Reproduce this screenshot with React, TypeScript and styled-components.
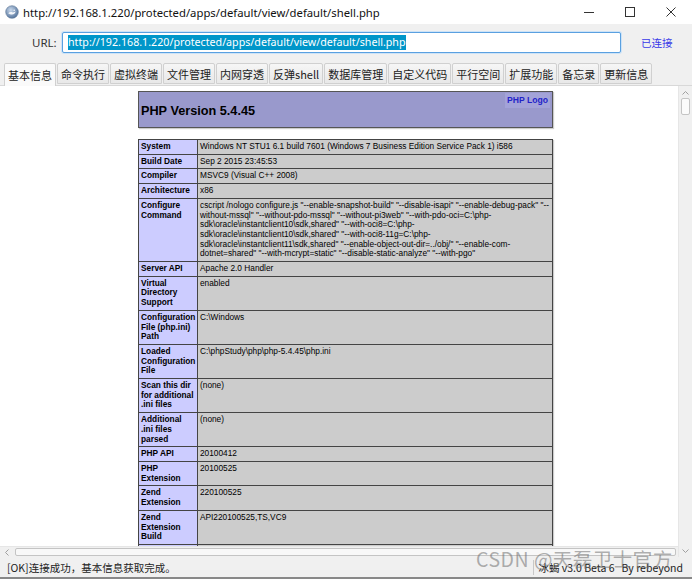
import React from "react";
import styled, { createGlobalStyle } from "styled-components";

const GlobalStyle = createGlobalStyle`
  html, body {
    margin: 0;
    padding: 0;
    background: #ffffff;
  }
  * {
    box-sizing: border-box;
  }
`;

const UI_FONT = `"Noto Sans", "Noto Sans CJK SC", sans-serif`;
const CJK_FONT = `"Noto Sans CJK SC", "Noto Sans", sans-serif`;
const PHP_FONT = `"Liberation Sans", Arial, sans-serif`;

const tabs = [
  "基本信息",
  "命令执行",
  "虚拟终端",
  "文件管理",
  "内网穿透",
  "反弹shell",
  "数据库管理",
  "自定义代码",
  "平行空间",
  "扩展功能",
  "备忘录",
  "更新信息",
];

// keys may carry "\n" where the original browser wrapped them
const rows: [string, string][] = [
  ["System", "Windows NT STU1 6.1 build 7601 (Windows 7 Business Edition Service Pack 1) i586"],
  ["Build Date", "Sep 2 2015 23:45:53"],
  ["Compiler", "MSVC9 (Visual C++ 2008)"],
  ["Architecture", "x86"],
  [
    "Configure Command",
    `cscript /nologo configure.js "--enable-snapshot-build" "--disable-isapi" "--enable-debug-pack" "--without-mssql" "--without-pdo-mssql" "--without-pi3web" "--with-pdo-oci=C:\\php-sdk\\oracle\\instantclient10\\sdk,shared" "--with-oci8=C:\\php-sdk\\oracle\\instantclient10\\sdk,shared" "--with-oci8-11g=C:\\php-sdk\\oracle\\instantclient11\\sdk,shared" "--enable-object-out-dir=../obj/" "--enable-com-dotnet=shared" "--with-mcrypt=static" "--disable-static-analyze" "--with-pgo"`,
  ],
  ["Server API", "Apache 2.0 Handler"],
  ["Virtual Directory Support", "enabled"],
  ["Configuration File (php.ini) Path", "C:\\Windows"],
  ["Loaded Configuration File", "C:\\phpStudy\\php\\php-5.4.45\\php.ini"],
  ["Scan this dir for additional .ini files", "(none)"],
  ["Additional\n.ini files parsed", "(none)"],
  ["PHP API", "20100412"],
  ["PHP Extension", "20100525"],
  ["Zend Extension", "220100525"],
  ["Zend Extension Build", "API220100525,TS,VC9"],
  ["PHP Extension Build", "API20100525,TS,VC9"],
  ["Debug Build", "no"],
  ["Thread Safety", "enabled"],
];

export default function App() {
  return (
    <>
      <GlobalStyle />
      <Window>
        <TitleBar>
          <AppIcon viewBox="0 0 14 14">
            <defs>
              <radialGradient id="ico" cx="40%" cy="35%" r="70%">
                <stop offset="0" stopColor="#c9d9ec" />
                <stop offset="1" stopColor="#4f6f98" />
              </radialGradient>
            </defs>
            <circle cx="7" cy="7" r="6.3" fill="url(#ico)" stroke="#5c7596" strokeWidth="0.6" />
            <path d="M3.2 8.2 C4.5 6.8 6 6.6 7.8 7.4 L10.8 6.4 L9.6 8.6 C8 9.8 5.6 10 3.2 8.2 Z" fill="#f4f7fb" />
            <circle cx="9.2" cy="5.2" r="0.8" fill="#f4f7fb" />
          </AppIcon>
          <TitleText>http://192.168.1.220/protected/apps/default/view/default/shell.php</TitleText>
          <WinControls>
            <WinButton>
              <svg width="10" height="10" viewBox="0 0 10 10">
                <line x1="0" y1="5.5" x2="10" y2="5.5" stroke="#333" strokeWidth="1" />
              </svg>
            </WinButton>
            <WinButton>
              <svg width="10" height="10" viewBox="0 0 10 10">
                <rect x="0.5" y="0.5" width="9" height="9" fill="none" stroke="#333" strokeWidth="1" />
              </svg>
            </WinButton>
            <WinButton>
              <svg width="10" height="10" viewBox="0 0 10 10">
                <path d="M0.5 0.5 L9.5 9.5 M9.5 0.5 L0.5 9.5" stroke="#333" strokeWidth="1" />
              </svg>
            </WinButton>
          </WinControls>
        </TitleBar>

        <UrlRow>
          <UrlLabel>URL:</UrlLabel>
          <UrlInput>
            <Selected>http://192.168.1.220/protected/apps/default/view/default/shell.php</Selected>
          </UrlInput>
          <StatusLink>已连接</StatusLink>
        </UrlRow>

        <TabStrip>
          {tabs.map((t, i) => (
            <Tab key={t} $active={i === 0}>
              {t}
            </Tab>
          ))}
        </TabStrip>

        <ContentArea>
          <Viewport>
            <PhpPage>
              <HeaderBox>
                <LogoAlt>PHP Logo</LogoAlt>
                <PhpTitle>PHP Version 5.4.45</PhpTitle>
              </HeaderBox>
              <InfoTable>
                <tbody>
                  {rows.map(([k, v]) => (
                    <tr key={k}>
                      <KeyCell>{k}</KeyCell>
                      <ValueCell>{v}</ValueCell>
                    </tr>
                  ))}
                </tbody>
              </InfoTable>
            </PhpPage>
          </Viewport>
          <VScroll>
            <ArrowGlyph>
              <svg width="7" height="4" viewBox="0 0 7 4">
                <path d="M0.5 3.5 L3.5 0.5 L6.5 3.5" fill="none" stroke="#a0a0a0" strokeWidth="1" />
              </svg>
            </ArrowGlyph>
            <VThumb />
            <VTrackFill />
            <ArrowGlyph>
              <svg width="7" height="4" viewBox="0 0 7 4">
                <path d="M0.5 0.5 L3.5 3.5 L6.5 0.5" fill="none" stroke="#a0a0a0" strokeWidth="1" />
              </svg>
            </ArrowGlyph>
          </VScroll>
          <HScroll>
            <ArrowGlyph>
              <svg width="4" height="7" viewBox="0 0 4 7">
                <path d="M3.5 0.5 L0.5 3.5 L3.5 6.5" fill="none" stroke="#a0a0a0" strokeWidth="1" />
              </svg>
            </ArrowGlyph>
            <HThumb />
          </HScroll>
        </ContentArea>

        <StatusBar>
          <StatusText>[OK]连接成功，基本信息获取完成。</StatusText>
          <VersionText>冰蝎 v3.0 Beta 6&nbsp;&nbsp;&nbsp;By rebeyond</VersionText>
          <Watermark>CSDN @天磊卫士官方</Watermark>
        </StatusBar>
      </Window>
    </>
  );
}

const Window = styled.div`
  width: 692px;
  height: 579px;
  display: flex;
  flex-direction: column;
  background: #f0f0f0;
  overflow: hidden;
  font-family: ${UI_FONT};
`;

const TitleBar = styled.div`
  height: 24px;
  display: flex;
  align-items: center;
  background: #ffffff;
  padding-left: 5px;
`;

const AppIcon = styled.svg`
  width: 14px;
  height: 14px;
  flex: none;
`;

const TitleText = styled.div`
  margin-left: 4px;
  font-size: 11.3px;
  color: #111;
  flex: 1;
  white-space: nowrap;
`;

const WinControls = styled.div`
  display: flex;
  height: 100%;
  margin-right: 1px;
`;

const WinButton = styled.div`
  width: 41px;
  height: 100%;
  display: flex;
  align-items: center;
  justify-content: center;
`;

const UrlRow = styled.div`
  height: 36px;
  display: flex;
  align-items: center;
  padding-left: 32px;
`;

const UrlLabel = styled.span`
  font-size: 11.5px;
  color: #333;
  width: 30px;
`;

const UrlInput = styled.div`
  width: 559px;
  height: 21px;
  border: 1px solid #5aa0e0;
  border-radius: 2px;
  background: #ffffff;
  display: flex;
  align-items: center;
  padding-left: 5px;
  box-shadow: 0 0 0 1px #cde3f7;
`;

const Selected = styled.span`
  background: #0096c9;
  color: #ffffff;
  font-size: 10.7px;
  line-height: 15px;
  white-space: nowrap;
`;

const StatusLink = styled.span`
  margin-left: 20px;
  font-family: ${CJK_FONT};
  font-size: 10.5px;
  color: #3a3ae8;
`;

const TabStrip = styled.div`
  height: 26px;
  display: flex;
  align-items: flex-end;
  gap: 1px;
  padding-left: 4px;
  border-bottom: 1px solid #d8d8d8;
`;

const Tab = styled.div<{ $active?: boolean }>`
  height: ${(p) => (p.$active ? "23px" : "21px")};
  margin-bottom: ${(p) => (p.$active ? "-1px" : "1px")};
  padding: 0 3px;
  display: flex;
  align-items: center;
  font-family: ${CJK_FONT};
  font-size: 11px;
  color: #222;
  border: 1px solid #d0d0d0;
  border-bottom: ${(p) => (p.$active ? "none" : "1px solid #d0d0d0")};
  border-radius: 2px 2px 0 0;
  background: ${(p) =>
    p.$active ? "#fafafa" : "linear-gradient(#f6f6f6, #e8e8e8)"};
`;

const ContentArea = styled.div`
  height: 471px;
  display: grid;
  grid-template-columns: 1fr 14px;
  grid-template-rows: 1fr 11px;
  background: #ffffff;
`;

const Viewport = styled.div`
  overflow: hidden;
  background: #ffffff;
`;

const PhpPage = styled.div`
  padding: 5px 0 0 138px;
  font-family: ${PHP_FONT};
  color: #000;
`;

const HeaderBox = styled.div`
  width: 415px;
  height: 37px;
  background: #9999cc;
  border: 1px solid #555;
  padding: 1px 2px;
  box-shadow: 1px 1px 1px #ccc;
`;

const LogoAlt = styled.div`
  float: right;
  font-size: 8.6px;
  font-weight: bold;
  color: #2323c8;
  background: #a3a3d8;
  padding: 2px 2px 3px;
`;

const PhpTitle = styled.h1`
  margin: 0;
  padding-top: 10px;
  font-size: 12.7px;
  font-weight: bold;
  line-height: 16px;
`;

const InfoTable = styled.table`
  margin-top: 11px;
  width: 415px;
  border-collapse: collapse;
  table-layout: fixed;
  box-shadow: 1px 1px 1px #ccc;
`;

const Cell = styled.td`
  border: 1px solid #444;
  font-size: 8.3px;
  line-height: 9.7px;
  padding: 2px;
  vertical-align: top;
`;

const KeyCell = styled(Cell)`
  width: 59px;
  padding-right: 0;
  background: #ccccff;
  font-weight: bold;
  white-space: pre-line;
`;

const ValueCell = styled(Cell)`
  background: #cccccc;
  word-wrap: break-word;
`;

const VScroll = styled.div`
  grid-row: 1 / span 2;
  grid-column: 2;
  display: flex;
  flex-direction: column;
  align-items: center;
  background: #f0f0f0;
  border-left: 1px solid #e6e6e6;
  padding: 3px 0 3px;
`;

const ArrowGlyph = styled.div`
  display: flex;
  align-items: center;
  justify-content: center;
  height: 7px;
  width: 10px;
`;

const VThumb = styled.div`
  margin-top: 2px;
  width: 9px;
  height: 17px;
  background: #fbfbfb;
  border: 1px solid #c4c4c4;
  border-radius: 2px;
`;

const VTrackFill = styled.div`
  flex: 1;
`;

const HScroll = styled.div`
  grid-row: 2;
  grid-column: 1;
  display: flex;
  align-items: center;
  gap: 3px;
  padding: 0 2px 0 2px;
  background: #f0f0f0;
  border-top: 1px solid #e6e6e6;
`;

const HThumb = styled.div`
  flex: 1;
  height: 8px;
  background: #f8f8f8;
  border: 1px solid #c4c4c4;
  border-radius: 2px;
`;

const StatusBar = styled.div`
  position: relative;
  flex: 1;
  display: flex;
  align-items: center;
  justify-content: space-between;
  padding: 0 9px 0 7px;
  background: #f0f0f0;
  border-bottom: 2px solid #888;
`;

const StatusText = styled.span`
  font-family: ${CJK_FONT};
  font-size: 10.5px;
  color: #222;
`;

const VersionText = styled.span`
  font-family: ${CJK_FONT};
  font-size: 10.5px;
  color: #222;
  border-left: 1px solid #c8c8c8;
  padding-left: 4px;
`;

const Watermark = styled.div`
  position: absolute;
  left: 476px;
  top: -13px;
  font-family: ${CJK_FONT};
  font-size: 19.5px;
  letter-spacing: 0.5px;
  color: rgba(110, 110, 110, 0.55);
  white-space: nowrap;
  pointer-events: none;
`;
